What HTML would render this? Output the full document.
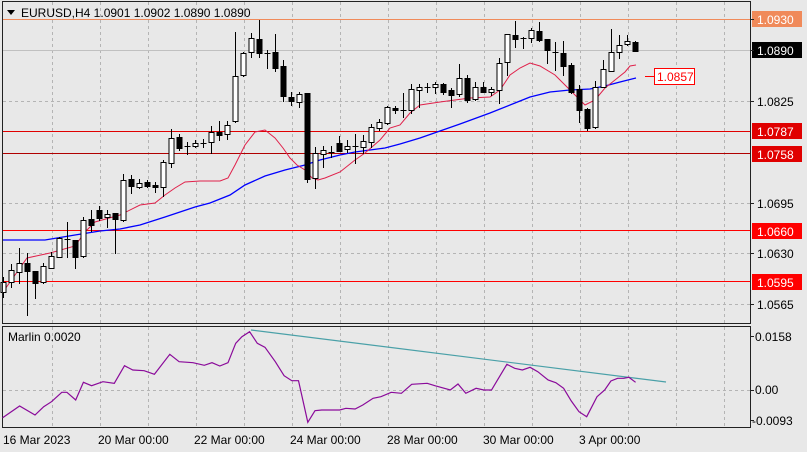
<!DOCTYPE html>
<html><head><meta charset="utf-8"><style>
html,body{margin:0;padding:0;background:#e8e8e8;}
svg{display:block;font-family:"Liberation Sans",sans-serif;}
</style></head><body>
<svg id="s" width="807" height="452" xmlns="http://www.w3.org/2000/svg">
<rect width="807" height="452" fill="#e8e8e8"/>
<g id="grid" stroke="#b4b4b4" stroke-dasharray="3,3" stroke-width="1"></g>
<!-- horizontal levels -->
<line x1="3" y1="19.5" x2="750" y2="19.5" stroke="#f08a5a"/>
<line x1="3" y1="50.5" x2="750" y2="50.5" stroke="#c0c0c0"/>
<line x1="3" y1="131.5" x2="750" y2="131.5" stroke="#e00000"/>
<line x1="3" y1="153.5" x2="750" y2="153.5" stroke="#b00000"/>
<line x1="3" y1="230.5" x2="750" y2="230.5" stroke="#ff0000"/>
<line x1="3" y1="281.5" x2="750" y2="281.5" stroke="#ff0000"/>
<polyline fill="none" stroke="#0000ff" stroke-width="1.3" points="3,240 45,240 75,235 100,231 120,229 140,225 165,217 195,207 210,203 230,195 245,185 265,176 285,170 305,165 320,160 340,155 355,152 370,150 385,148 400,144 420,138 440,131 460,124 490,113 515,103 530,97 550,92 570,90 590,89 605,86 620,82 636,78"/>
<polyline fill="none" stroke="#e0204a" stroke-width="1" points="3,292 15,275 27,258 50,253 75,246 85,232 95,222 120,215 140,205 155,203 165,195 175,188 185,182 200,181 220,181 228,178 235,165 245,145 255,132 265,130 275,138 283,148 290,158 297,165 305,170 312,178 318,180 325,178 340,172 355,160 365,153 380,140 390,128 400,125 410,113 420,105 440,102 455,100 470,98 490,97 500,90 510,75 520,68 530,63 540,66 555,75 565,85 575,95 585,105 595,100 605,88 615,80 625,72 630,66 636,65"/>
<g id="candles"></g>
<!-- frames -->
<rect x="2.5" y="1.5" width="748" height="322" fill="none" stroke="#222"/>
<rect x="2.5" y="326.5" width="748" height="101" fill="none" stroke="#222"/>
<!-- title -->
<path d="M7,10 L15,10 L11,15 Z" fill="#000"/>
<text x="21" y="17" font-size="12" fill="#000">EURUSD,H4  1.0901 1.0902 1.0890 1.0890</text>
<!-- right axis labels -->
<g font-size="12">
<rect x="752" y="11" width="50" height="16" fill="#f08a5a"/><text x="757" y="24" fill="#fff">1.0930</text>
<rect x="752" y="42" width="50" height="16" fill="#000"/><text x="757" y="55" fill="#fff">1.0890</text>
<text x="757" y="106" fill="#000">1.0825</text>
<rect x="752" y="123" width="50" height="16" fill="#e00000"/><text x="757" y="136" fill="#fff">1.0787</text>
<rect x="752" y="146" width="50" height="16" fill="#e00000"/><text x="757" y="159" fill="#fff">1.0758</text>
<text x="757" y="208" fill="#000">1.0695</text>
<rect x="752" y="223" width="50" height="16" fill="#ff0000"/><text x="757" y="236" fill="#fff">1.0660</text>
<text x="757" y="258" fill="#000">1.0630</text>
<rect x="752" y="274" width="50" height="16" fill="#ff0000"/><text x="757" y="287" fill="#fff">1.0595</text>
<text x="757" y="309" fill="#000">1.0565</text>
<line x1="645" y1="76.5" x2="654" y2="76.5" stroke="#ff0000"/>
<rect x="654.5" y="68.5" width="40" height="16" fill="#fff" stroke="#ff0000"/>
<text x="657" y="81" fill="#ff0000">1.0857</text>
<text x="755" y="341" fill="#000">0.0158</text>
<text x="755" y="394" fill="#000">0.00</text>
<text x="752" y="425" fill="#000">-0.0093</text>
<text x="8" y="341" fill="#000">Marlin 0.0020</text>
<text x="3" y="444" fill="#000">16 Mar 2023</text>
<text x="98" y="444" fill="#000">20 Mar 00:00</text>
<text x="194" y="444" fill="#000">22 Mar 00:00</text>
<text x="290" y="444" fill="#000">24 Mar 00:00</text>
<text x="387" y="444" fill="#000">28 Mar 00:00</text>
<text x="483" y="444" fill="#000">30 Mar 00:00</text>
<text x="579" y="444" fill="#000">3 Apr 00:00</text>
</g>
<g stroke="#222">
<line x1="750" y1="19.5" x2="754" y2="19.5"/><line x1="750" y1="50.5" x2="754" y2="50.5"/><line x1="750" y1="101.5" x2="754" y2="101.5"/><line x1="750" y1="203.5" x2="754" y2="203.5"/><line x1="750" y1="253.5" x2="754" y2="253.5"/><line x1="750" y1="304.5" x2="754" y2="304.5"/>
<line x1="750" y1="336.5" x2="754" y2="336.5"/><line x1="750" y1="390.5" x2="754" y2="390.5"/><line x1="750" y1="420.5" x2="754" y2="420.5"/>
</g>
<line x1="251" y1="330" x2="666" y2="382" stroke="#4aa0a8" stroke-width="1.2"/>
<polyline fill="none" stroke="#8a0a9a" stroke-width="1.2" points="2.6,417.7 19.6,406 35,415 43.7,406.7 51.5,401.7 61.8,392.3 66.9,392.3 75.7,400 83.4,382.3 91.6,385.7 102.9,381.7 114.3,383.3 124.5,365.7 132.8,370 144.1,370.7 154.4,374.3 169.8,354.3 179.1,361.7 193,362.7 204.3,365.3 212,362.7 219.8,366 228,362.7 235.7,343.3 241.9,336.7 249.6,331.7 257.3,343.3 265,347.3 275.3,361.7 284.1,375.7 291.8,380.7 298.5,380.7 307.8,422.3 315,410.7 321.7,410 339.7,410 345.9,408.3 355.1,409 362.8,405 373.1,398.3 380.9,396.7 391.2,392.3 401.4,393.3 411.7,384.3 427.2,383.3 434.9,385.7 450.3,390 458,384 465.8,393.3 476.1,388.3 483.8,390 491.5,390 506.9,364.3 514.7,368.3 522.4,370 530.1,367.3 537.8,371.7 548.1,380 555.8,382.7 563.6,388.3 571.3,401 579,411.7 586.7,416.7 597,396.7 604.7,390 610.9,381 617.6,378.3 623.8,378.3 628.9,377.3 635.6,382.3"/>
</svg>
<script>
var NS="http://www.w3.org/2000/svg";
function el(p,t,a){var e=document.createElementNS(NS,t);for(var k in a)e.setAttribute(k,a[k]);p.appendChild(e);return e;}
var g=document.getElementById('grid');
for(var x=52;x<750;x+=48){var xx=Math.round(x+(x-52)/48*0.0)+0.5;el(g,'line',{x1:xx,y1:2,x2:xx,y2:323});el(g,'line',{x1:xx,y1:327,x2:xx,y2:427});}
[101,203,253,304].forEach(function(y){el(g,'line',{x1:3,y1:y+.5,x2:750,y2:y+.5});});
el(g,'line',{x1:3,y1:390.5,x2:750,y2:390.5});
var C=[
[282,292,277,297,'w'],[270,282,264,287,'w'],[263,272,248,283,'w'],[263,271,253,315,'b'],[271,283,271,298,'b'],
[266,282,263,283,'w'],[256,268,252,268,'w'],[238,257,237,257,'w'],[239,239,222,257,'d'],[240,257,240,268,'b'],
[220,256,217,257,'w'],[219,225,210,231,'b'],[210,218,206,220,'b'],[214,217,210,227,'w'],[213,219,213,253,'b'],
[180,220,174,221,'w'],[179,186,175,193,'b'],[183,187,179,188,'w'],[182,186,180,187,'b'],[185,187,182,192,'b'],
[162,187,160,196,'w'],[138,163,129,167,'w'],[137,148,134,150,'b'],[146,146,142,154,'d'],[143,146,140,147,'w'],
[143,143,139,147,'d'],[132,142,126,153,'w'],[132,135,121,140,'b'],[125,134,121,139,'w'],[76,121,32,122,'w'],
[53,75,52,76,'w'],[38,52,33,57,'w'],[39,53,20,57,'b'],[53,53,50,68,'d'],[52,68,34,71,'b'],
[66,96,60,101,'b'],[97,101,92,105,'b'],[94,102,92,107,'w'],[93,179,93,182,'b'],[153,178,147,188,'w'],
[150,154,146,167,'w'],[152,152,146,157,'d'],[143,151,136,151,'b'],[146,149,140,152,'w'],[146,146,134,163,'d'],
[141,147,135,153,'w'],[127,142,124,147,'w'],[122,128,119,130,'w'],[107,123,106,124,'w'],[108,110,106,113,'b'],
[110,110,93,117,'d'],[89,110,84,113,'w'],[87,90,84,107,'w'],[87,87,83,92,'d'],[84,87,82,93,'w'],
[84,92,83,94,'b'],[90,95,88,107,'b'],[78,94,64,96,'w'],[78,100,75,102,'b'],[87,99,82,100,'w'],
[87,92,82,92,'b'],[89,92,87,95,'w'],[63,90,58,103,'w'],[34,62,34,75,'w'],[35,39,21,47,'b'],
[38,38,37,48,'d'],[30,38,28,42,'w'],[31,40,22,41,'b'],[39,50,39,63,'b'],[52,52,42,70,'d'],
[53,66,41,75,'b'],[65,92,63,93,'b'],[89,110,85,122,'b'],[109,128,108,130,'b'],[87,127,81,128,'w'],
[69,87,60,87,'w'],[52,71,29,71,'w'],[45,52,35,58,'w'],[41,44,35,45,'w'],[42,51,41,51,'b']];
var cg=document.getElementById('candles');
C.forEach(function(c,i){var cx=Math.round(3.3+8*i)+0.5;
el(cg,'line',{x1:cx,y1:c[2],x2:cx,y2:c[3]+1,stroke:'#000'});
if(c[4]=='d'){el(cg,'line',{x1:cx-3,y1:c[0]+.5,x2:cx+3,y2:c[0]+.5,stroke:'#000'});}
else el(cg,'rect',{x:cx-2.5,y:c[0]+.5,width:5,height:Math.max(1,c[1]-c[0]),fill:c[4]=='w'?'#fff':'#000',stroke:'#000'});
});
</script>
</body></html>
